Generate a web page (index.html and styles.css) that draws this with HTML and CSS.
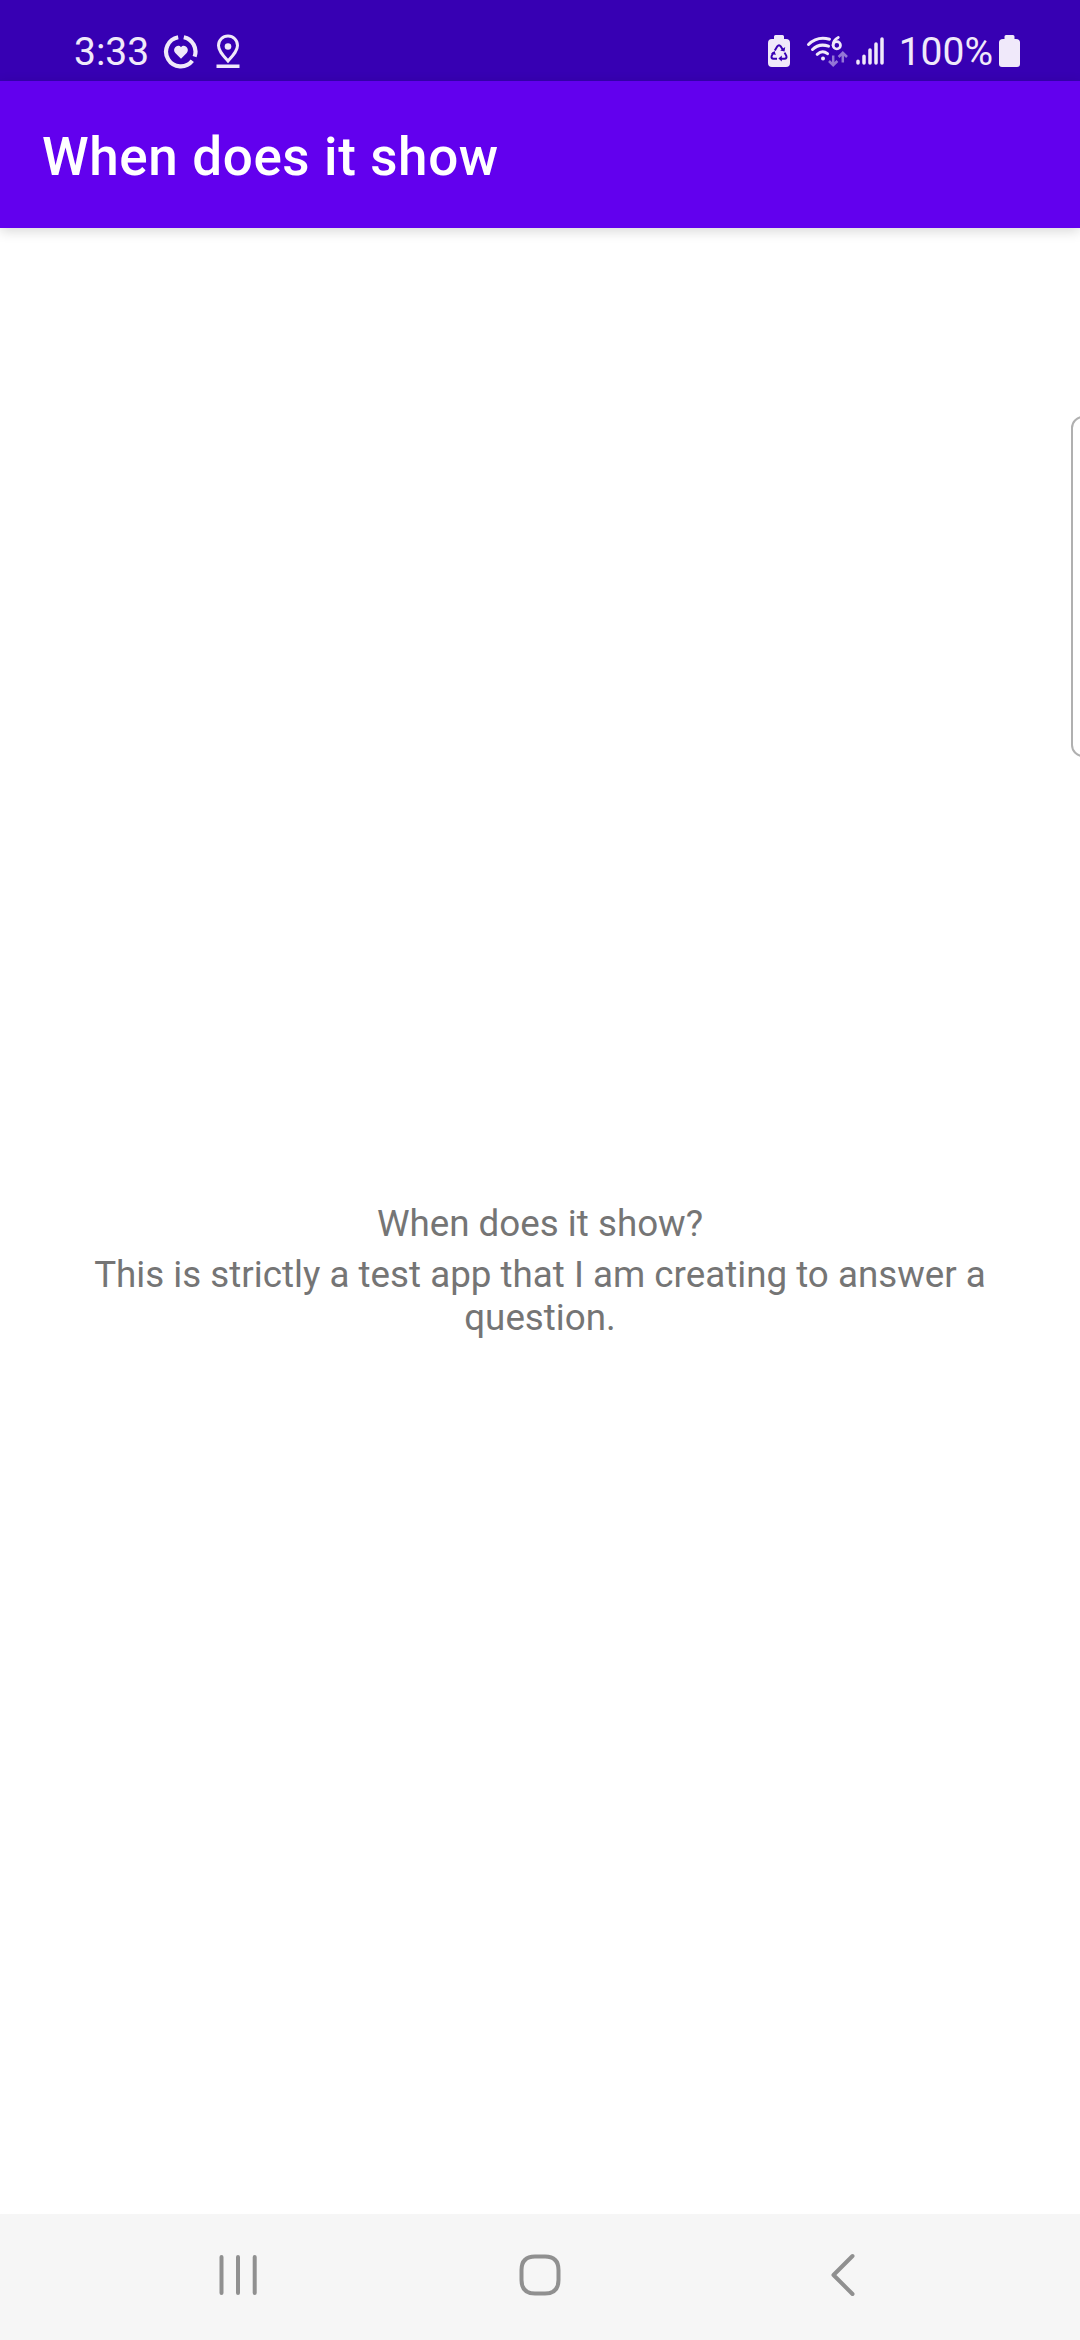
FILE: index.html
```html
<!DOCTYPE html>
<html lang="en">
<head>
<meta charset="utf-8">
<title>When does it show</title>
<link rel="stylesheet" href="styles.css">
</head>
<body>
<div class="screen">
  <header class="status-bar">
    <div class="status-left">
      <span class="clock">3:33</span>
      <svg class="icon-health" width="36" height="36" viewBox="0 0 36 36">
        <g fill="none" stroke="currentColor" stroke-width="4.2">
          <path d="M15.2 3.2A14.7 14.7 0 1 0 29.3 26.8"/>
          <path d="M20.8 3.2A14.7 14.7 0 0 1 31.6 22.6"/>
        </g>
        <path fill="currentColor" d="M18 24.8L12.3 19C8.6 14.8 14.6 9.200 18 13.200C21.400 9.200 27.400 14.800 23.700 19Z"/>
      </svg>
      <svg class="icon-pin" width="24" height="36" viewBox="0 0 24 36">
        <path fill="none" stroke="currentColor" stroke-width="3" d="M12 27C7 21.500 2.500 17 2.500 11.500A9.500 9.500 0 0 1 21.500 11.500C21.500 17 17 21.500 12 27Z"/>
        <circle cx="12" cy="12.500" r="3.300" fill="currentColor"/>
        <path fill="currentColor" d="M.5 30.500h23v3.500H.5z"/>
      </svg>
    </div>
    <div class="status-right">
      <svg class="icon-recycle" width="24" height="34" viewBox="0 0 24 34">
        <path fill="currentColor" d="M8.500 1h7q1.500 0 1.500 1.500V5h2q4 0 4 4v20q0 4-4 4H5q-4 0-4-4V9q0-4 4-4h2V2.500Q7 1 8.500 1z"/>
        <g fill="none" stroke="#3700b3" stroke-width="2">
          <path d="M7.800 16.500L10.300 12.300Q12 10 13.700 12.300L15.800 15.800"/>
          <path d="M17.600 18.600L19.300 21.800Q20.200 24.500 17.500 24.700H13.500"/>
          <path d="M10 24.700H6.500Q3.800 24.500 4.700 21.800L6.400 18.800"/>
        </g>
        <path fill="#3700b3" d="M13.200 16.500l4.300 1 .7-4.400zM14.800 21.600v6l-3.400-3zM3.900 19.500l3.700-2.500 1.200 4z"/>
      </svg>
      <svg class="icon-wifi" width="42" height="36" viewBox="0 0 42 36">
        <g fill="none" stroke="currentColor" stroke-width="3" stroke-linecap="round">
          <path d="M2.500 10.500C8 5 15.500 3 23.500 5.200"/>
          <path d="M6.500 15.500C11 11 17 10.300 22.500 12.200"/>
          <path d="M11.200 20.300C14.500 17.300 18.500 17.300 21.500 19.700"/>
          <path stroke-width="2.700" d="M32.300 3.500C28.500 5.500 27 8 27 11.200"/>
          <circle cx="30.800" cy="11.300" r="3.700" stroke-width="2.700"/>
        </g>
        <circle cx="17" cy="24.500" r="2" fill="currentColor"/>
        <g class="data-arrows" fill="none" stroke="currentColor" stroke-width="2.500">
          <path d="M27.200 21.500v9.500M23 27l4.200 4.200 4.200-4.200M36.800 28.500v-9.500M32.600 23l4.200-4.200L41 23"/>
        </g>
      </svg>
      <svg class="icon-signal" width="28" height="30" viewBox="0 0 28 30">
        <path fill="none" stroke="currentColor" stroke-width="3.500" stroke-linecap="round" d="M2 25.200v1.800M8 20.200v6.800M14 14v13M20 8v19M26 3v24"/>
      </svg>
      <span class="percent">100%</span>
      <svg class="icon-battery" width="21" height="34" viewBox="0 0 21 34">
        <path fill="currentColor" d="M7 1h7q1.500 0 1.500 1.500V5H17q4 0 4 3.500V30q0 3-3 3H3q-3 0-3-3V8.500Q0 5 4 5h1.500V2.500Q5.500 1 7 1z"/>
      </svg>
    </div>
  </header>
  <div class="app-bar"><h1 class="app-title">When does it show</h1></div>
  <main class="content">
    <p class="message">When does it show?</p>
    <p class="message">This is strictly a test app that I am creating to answer a question.</p>
  </main>
  <nav class="nav-bar">
    <svg class="nav-icon" width="44" height="44" viewBox="0 0 44 44">
      <path d="M5.500 4v36M22 4v36M38.700 4v36"/>
    </svg>
    <svg class="nav-icon" width="44" height="44" viewBox="0 0 44 44">
      <path d="M17 3.500H27Q40.500 3.500 40.500 17V27Q40.500 40.500 27 40.500H17Q3.500 40.500 3.500 27V17Q3.500 3.500 17 3.500Z"/>
    </svg>
    <svg class="nav-icon" width="44" height="44" viewBox="0 0 44 44">
      <path d="M32.500 3L13.500 22L32.500 41"/>
    </svg>
  </nav>
  <div class="edge-handle"></div>
</div>
</body>
</html>
```
FILE: styles.css
```css
* {
  box-sizing: border-box;
}

body {
  margin: 0;
  background: #fff;
  font-family: Roboto, sans-serif;
}

.screen {
  position: relative;
  display: flex;
  flex-direction: column;
  width: 1080px;
  height: 2340px;
  overflow: hidden;
}

.status-bar {
  display: flex;
  justify-content: space-between;
  align-items: flex-start;
  height: 81px;
  padding: 34px 60px 0 74px;
  background: #3700b3;
  color: #f0e9fa;
  font-size: 39px;
  line-height: 36px;
}

.status-left,
.status-right {
  display: flex;
  align-items: flex-start;
}

.status-bar svg {
  display: block;
  flex: none;
}

.icon-health {
  margin-left: 14px;
}

.icon-pin {
  margin-left: 17px;
}

.icon-wifi {
  margin-left: 15px;
}

.data-arrows {
  opacity: 0.5;
}

.icon-signal {
  margin: 2px 0 0 8px;
}

.percent {
  margin-left: 15px;
}

.icon-battery {
  margin-left: 6px;
}

.app-bar {
  z-index: 1;
  display: flex;
  align-items: center;
  height: 147px;
  padding: 4px 42px 0;
  background: #6200ee;
  box-shadow: 0 3px 12px rgba(0, 0, 0, 0.16);
}

.app-title {
  margin: 0;
  color: #fff;
  font-size: 53px;
  font-weight: 500;
  line-height: 62px;
  letter-spacing: 0.0115em;
}

.content {
  display: flex;
  flex: 1;
  flex-direction: column;
  gap: 8px;
  padding: 974px 84px 0;
}

.message {
  margin: 0;
  color: #757575;
  font-size: 36.75px;
  line-height: 43px;
  text-align: center;
}

.nav-bar {
  display: flex;
  align-items: center;
  justify-content: space-between;
  height: 126px;
  padding: 0 216px 4px;
  background: #f6f6f6;
}

.nav-icon {
  fill: none;
  stroke: #909090;
  stroke-width: 4;
  stroke-linecap: round;
  stroke-linejoin: round;
}

.edge-handle {
  position: absolute;
  top: 416px;
  right: -20px;
  width: 29px;
  height: 341px;
  border: 2px solid #b0b0b0;
  border-radius: 12px;
}
```
